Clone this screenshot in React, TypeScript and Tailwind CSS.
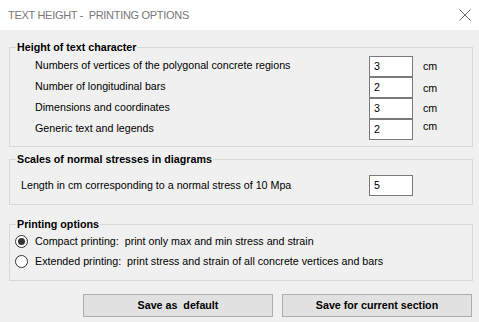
import React from "react";

const font = { fontFamily: '"Liberation Sans", Arial, sans-serif' };

const heights = [
  { label: "Numbers of vertices of the polygonal concrete regions", value: "3", cm: "" },
  { label: "Number of longitudinal bars", value: "2", cm: "translate-y-[1px]" },
  { label: "Dimensions and coordinates", value: "3", cm: "" },
  { label: "Generic text and legends", value: "2", cm: "-translate-y-[3px]" },
];

function Radio({ checked, label }: { checked?: boolean; label: string }) {
  return (
    <label className="flex h-[20px] items-center">
      <span className="-ml-px flex h-[13px] w-[13px] items-center justify-center rounded-full border border-[#333] bg-white">
        {checked && <span className="h-[7px] w-[7px] rounded-full bg-[#333]"></span>}
      </span>
      <span className="ml-[7px] whitespace-pre">{label}</span>
    </label>
  );
}

export default function App() {
  return (
    <div
      className="h-[322px] w-[479px] overflow-hidden bg-[#f0f0f0] text-[10.7px] text-black"
      style={font}
    >
      {/* title bar */}
      <div className="flex h-[30px] items-center justify-between bg-white pl-[8px] pr-[7px]">
        <span className="whitespace-pre text-[11px] tracking-[-0.3px] text-[#777]">
          TEXT HEIGHT -  PRINTING OPTIONS
        </span>
        <svg width="12" height="12" viewBox="0 0 12 12" className="mr-[1px]">
          <path d="M0.5 0.5 L11.5 11.5 M11.5 0.5 L0.5 11.5" stroke="#666" strokeWidth="1" />
        </svg>
      </div>

      <div className="pl-[9px] pr-[6px] pt-[10px]">
        {/* height of text character */}
        <fieldset className="border border-[#d8d8d8] pb-[6px] pl-[6px]">
          <legend className="px-[1px] text-[10.7px] font-bold leading-[14px]">
            Height of text character
          </legend>
          <div className="grid grid-cols-[334px_44px_auto] pl-[19px] pt-[2px]">
            {heights.map((row) => (
              <React.Fragment key={row.label}>
                <div className="flex h-[21px] items-center -translate-y-[1px]">{row.label}</div>
                <div className="flex h-[21px] items-center border border-[#7a7a7a] bg-white pl-[4px]">
                  {row.value}
                </div>
                <div className={`ml-[10px] flex h-[21px] items-center ${row.cm}`}>cm</div>
              </React.Fragment>
            ))}
          </div>
        </fieldset>

        {/* scales */}
        <fieldset className="mt-[5px] border border-[#d8d8d8] pb-[8px] pl-[6px]">
          <legend className="px-[1px] font-bold leading-[14px]">
            Scales of normal stresses in diagrams
          </legend>
          <div className="flex items-center pl-[5px] pt-[9px]">
            <div className="w-[348px]">
              Length in cm corresponding to a normal stress of 10 Mpa
            </div>
            <div className="flex h-[21px] w-[44px] items-center border border-[#7a7a7a] bg-white pl-[4px]">
              5
            </div>
          </div>
        </fieldset>

        {/* printing options */}
        <fieldset className="mt-[12px] border border-[#d8d8d8] pb-[9px] pl-[6px]">
          <legend className="px-[1px] font-bold leading-[14px]">Printing options</legend>
          <Radio checked label="Compact printing:  print only max and min stress and strain" />
          <Radio label="Extended printing:  print stress and strain of all concrete vertices and bars" />
        </fieldset>

        <div className="mr-px mt-[13px] flex justify-end gap-[9px]">
          <button className="h-[23px] w-[190px] whitespace-pre border border-[#adadad] bg-[#e1e1e1] font-bold">
            Save as  default
          </button>
          <button className="h-[23px] w-[190px] border border-[#adadad] bg-[#e1e1e1] font-bold">
            Save for current section
          </button>
        </div>
      </div>
    </div>
  );
}
